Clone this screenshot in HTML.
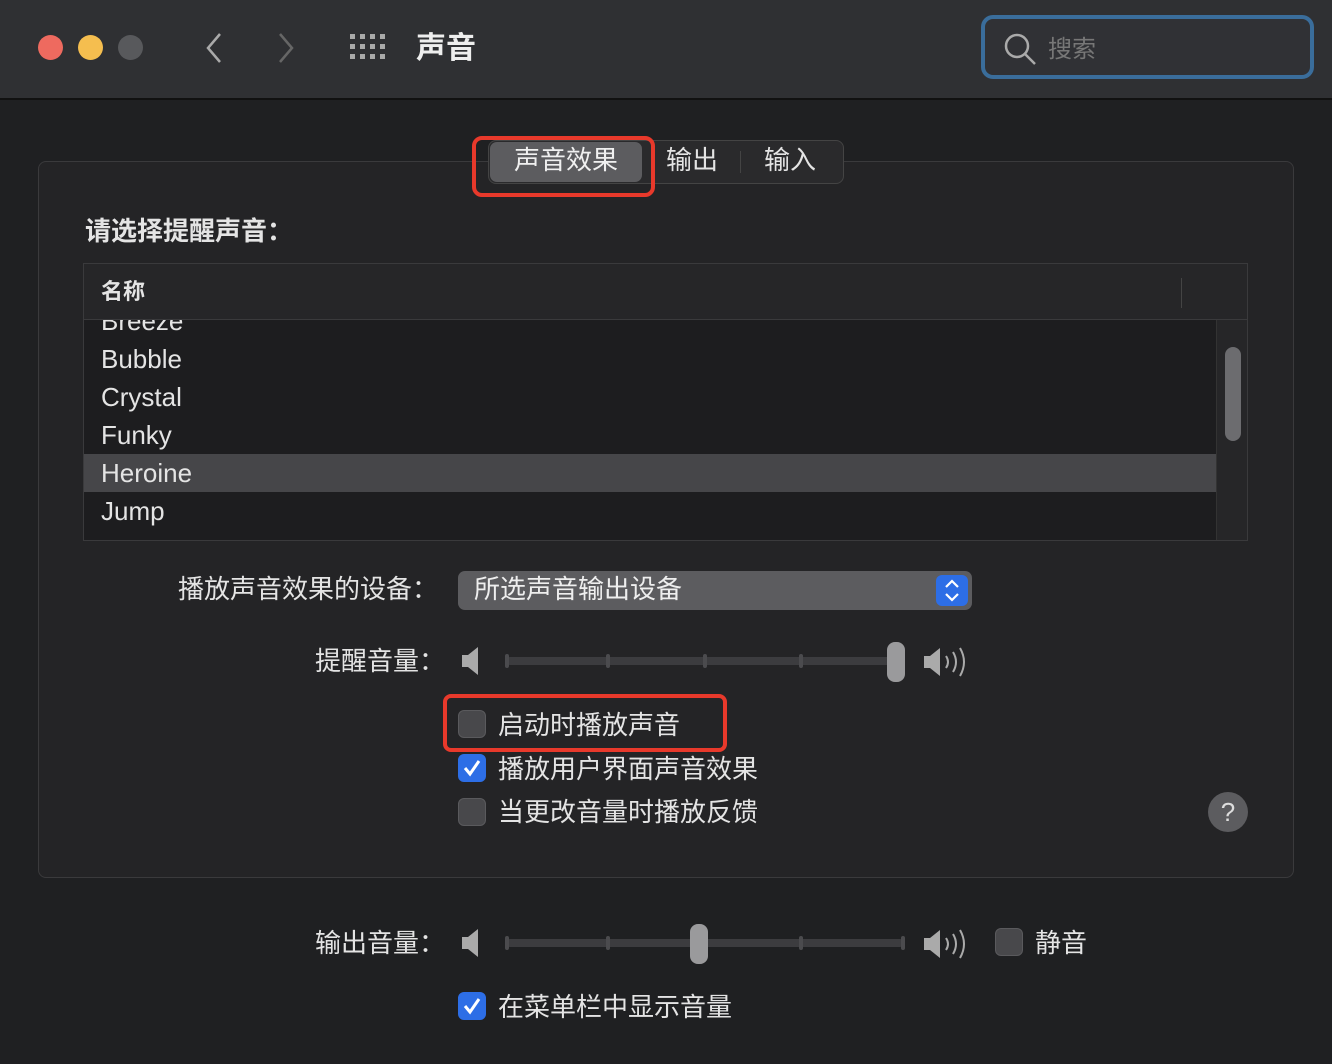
<!DOCTYPE html>
<html><head><meta charset="utf-8"><style>
*{box-sizing:border-box;margin:0;padding:0}
body{width:1332px;height:1064px;background:#1f2022;font-family:"Liberation Sans","Noto Sans CJK SC",sans-serif;color:#e4e4e4;position:relative;overflow:hidden}
.a{position:absolute}
.t{font-size:26px;line-height:26px;white-space:nowrap}
.cb{position:absolute;width:28px;height:28px;border-radius:6px;background:#48484b;border:1px solid #5a5a5d}
.cb.on{background:#2d6ee6;border-color:#2d6ee6}
.tick{position:absolute;width:4px;height:14px;background:#4b4b4e;border-radius:2px}
.track{position:absolute;height:8px;background:#3c3c3f;border-radius:4px}
.row{position:absolute;font-size:26px;line-height:26px}
</style></head><body>
<div class="a" style="left:0;top:0;width:1332px;height:100px;background:#2f3033;border-bottom:2px solid #111"></div>
<div class="a" style="left:38px;top:35px;width:25px;height:25px;border-radius:50%;background:#ee6a5f"></div>
<div class="a" style="left:78px;top:35px;width:25px;height:25px;border-radius:50%;background:#f5be4f"></div>
<div class="a" style="left:118px;top:35px;width:25px;height:25px;border-radius:50%;background:#58595c"></div>
<svg class="a" style="left:200px;top:30px" width="100" height="36"><path d="M20 4 L8 18 L20 32" stroke="#aaa" stroke-width="2.5" fill="none"/><path d="M80 4 L92 18 L80 32" stroke="#666" stroke-width="2.5" fill="none"/></svg>
<svg class="a" style="left:350px;top:34px" width="38" height="28" fill="#aaa"><g><rect x="0" y="0" width="5" height="5"/><rect x="10" y="0" width="5" height="5"/><rect x="20" y="0" width="5" height="5"/><rect x="30" y="0" width="5" height="5"/><rect x="0" y="10" width="5" height="5"/><rect x="10" y="10" width="5" height="5"/><rect x="20" y="10" width="5" height="5"/><rect x="30" y="10" width="5" height="5"/><rect x="0" y="20" width="5" height="5"/><rect x="10" y="20" width="5" height="5"/><rect x="20" y="20" width="5" height="5"/><rect x="30" y="20" width="5" height="5"/></g></svg>
<div class="a" style="left:416px;top:34px;font-size:30px;line-height:30px;font-weight:bold;color:#eee">声音</div>
<div class="a" style="left:981px;top:15px;width:333px;height:64px;border:4px solid #3a6d9b;border-radius:12px;background:#303135"></div>
<svg class="a" style="left:1002px;top:31px" width="36" height="36"><circle cx="15" cy="15" r="11" stroke="#aaa" stroke-width="2.5" fill="none"/><path d="M23 23 L33 33" stroke="#aaa" stroke-width="2.5"/></svg>
<div class="a t" style="left:1048px;top:37px;color:#777;font-size:24px">搜索</div>

<div class="a" style="left:38px;top:161px;width:1256px;height:717px;border:1px solid #3a3a3c;border-radius:8px;background:#242426"></div>
<div class="a" style="left:488px;top:140px;width:356px;height:44px;border:1px solid #444;border-radius:8px;background:#2a2a2c"></div>
<div class="a" style="left:490px;top:142px;width:152px;height:40px;border-radius:7px;background:#5c5c5f"></div>
<div class="a" style="left:740px;top:151px;width:1px;height:22px;background:#444"></div>
<div class="a t" style="left:514px;top:147px;color:#f0f0f0">声音效果</div>
<div class="a t" style="left:666px;top:147px">输出</div>
<div class="a t" style="left:764px;top:147px">输入</div>
<div class="a" style="left:472px;top:136px;width:183px;height:61px;border:4px solid #e8392b;border-radius:10px"></div>

<div class="a t" style="left:85px;top:218px;font-weight:bold">请选择提醒声音：</div>
<div class="a" style="left:83px;top:263px;width:1165px;height:278px;border:1px solid #3a3a3c;background:#1d1d1f;overflow:hidden">
 <div class="a" style="left:0;top:0;width:1165px;height:56px;background:#262628;border-bottom:1px solid #3a3a3c"></div>
 <div class="a" style="left:1097px;top:14px;width:1px;height:30px;background:#444"></div>
 <div class="a" style="left:17px;top:17px;font-size:22px;line-height:22px;font-weight:bold">名称</div>
 <div class="a" style="left:0;top:190px;width:1132px;height:38px;background:#464649"></div>
 <div class="a" style="left:1132px;top:56px;width:33px;height:222px;background:#262628;border-left:1px solid #333"></div>
 <div class="a" style="left:1141px;top:83px;width:16px;height:94px;border-radius:8px;background:#6c6c6f"></div>
</div>
<div class="a" style="left:83px;top:320px;width:1132px;height:220px;overflow:hidden">
 <div class="row" style="left:18px;top:-12px">Breeze</div>
 <div class="row" style="left:18px;top:26px">Bubble</div>
 <div class="row" style="left:18px;top:64px">Crystal</div>
 <div class="row" style="left:18px;top:102px">Funky</div>
 <div class="row" style="left:18px;top:140px">Heroine</div>
 <div class="row" style="left:18px;top:178px">Jump</div>
 <div class="row" style="left:18px;top:216px">Mezzo</div>
</div>

<div class="a t" style="left:178px;top:576px">播放声音效果的设备：</div>
<div class="a" style="left:458px;top:571px;width:514px;height:39px;border-radius:7px;background:#5c5c5f"></div>
<div class="a t" style="left:474px;top:576px;color:#eee">所选声音输出设备</div>
<div class="a" style="left:936px;top:575px;width:32px;height:31px;border-radius:6px;background:#2d6ee6"></div>
<svg class="a" style="left:936px;top:575px" width="32" height="31"><path d="M10 12 L16 6 L22 12 M10 19 L16 25 L22 19" stroke="#fff" stroke-width="2.2" fill="none"/></svg>

<div class="a t" style="left:315px;top:648px">提醒音量：</div>
<svg class="a" style="left:460px;top:645px" width="24" height="32"><path d="M2 10 H8 L18 2 V30 L8 22 H2Z" fill="#aaa"/></svg>
<div class="track" style="left:506px;top:657px;width:392px"></div>
<div class="tick" style="left:505px;top:654px"></div><div class="tick" style="left:606px;top:654px"></div><div class="tick" style="left:703px;top:654px"></div><div class="tick" style="left:799px;top:654px"></div>
<div class="a" style="left:887px;top:642px;width:18px;height:40px;border-radius:8px;background:#9a9a9c"></div>
<svg class="a" style="left:922px;top:645px" width="50" height="34"><path d="M2 11 H8 L18 3 V31 L8 23 H2Z" fill="#aaa"/><path d="M24 11 Q28 17 24 23 M31 7 Q37 17 31 27 M38 3 Q46 17 38 31" stroke="#aaa" stroke-width="2" fill="none"/></svg>

<div class="cb" style="left:458px;top:710px"></div>
<div class="a t" style="left:498px;top:712px">启动时播放声音</div>
<div class="a" style="left:443px;top:694px;width:284px;height:58px;border:4px solid #e8392b;border-radius:8px"></div>
<div class="cb on" style="left:458px;top:754px"></div>
<svg class="a" style="left:458px;top:754px" width="28" height="28"><path d="M7 14 L12 20 L21 7" stroke="#fff" stroke-width="3" fill="none"/></svg>
<div class="a t" style="left:498px;top:756px">播放用户界面声音效果</div>
<div class="cb" style="left:458px;top:798px"></div>
<div class="a t" style="left:498px;top:799px">当更改音量时播放反馈</div>
<div class="a" style="left:1208px;top:792px;width:40px;height:40px;border-radius:50%;background:#5c5c5f;color:#ddd;font-size:26px;text-align:center;line-height:40px">?</div>

<div class="a t" style="left:315px;top:930px">输出音量：</div>
<svg class="a" style="left:460px;top:927px" width="24" height="32"><path d="M2 10 H8 L18 2 V30 L8 22 H2Z" fill="#aaa"/></svg>
<div class="track" style="left:506px;top:939px;width:398px"></div>
<div class="tick" style="left:505px;top:936px"></div><div class="tick" style="left:606px;top:936px"></div><div class="tick" style="left:799px;top:936px"></div><div class="tick" style="left:901px;top:936px"></div>
<div class="a" style="left:690px;top:924px;width:18px;height:40px;border-radius:8px;background:#9a9a9c"></div>
<svg class="a" style="left:922px;top:927px" width="50" height="34"><path d="M2 11 H8 L18 3 V31 L8 23 H2Z" fill="#aaa"/><path d="M24 11 Q28 17 24 23 M31 7 Q37 17 31 27 M38 3 Q46 17 38 31" stroke="#aaa" stroke-width="2" fill="none"/></svg>
<div class="cb" style="left:995px;top:928px"></div>
<div class="a t" style="left:1035px;top:930px">静音</div>
<div class="cb on" style="left:458px;top:992px"></div>
<svg class="a" style="left:458px;top:992px" width="28" height="28"><path d="M7 14 L12 20 L21 7" stroke="#fff" stroke-width="3" fill="none"/></svg>
<div class="a t" style="left:498px;top:994px">在菜单栏中显示音量</div>
</body></html>
